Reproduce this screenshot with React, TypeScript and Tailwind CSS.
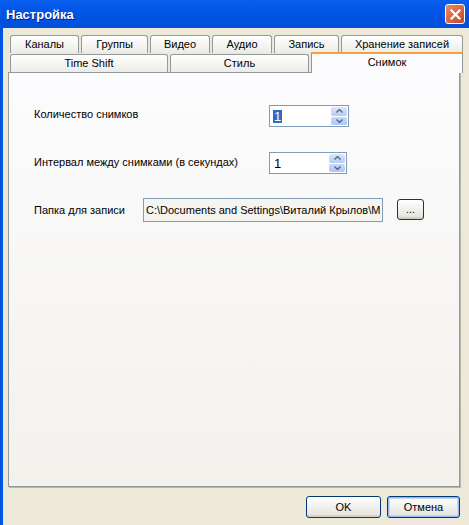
import { ReactNode } from "react";

const font = { fontFamily: '"Liberation Sans", Arial, sans-serif' };

function Tab({ w, children }: { w: string; children: ReactNode }) {
  return (
    <div
      className={`${w} h-[18px] shrink-0 rounded-t-[3px] border border-b-0 border-[#919b9c] bg-gradient-to-b from-[#ffffff] to-[#ecebe6] flex items-center justify-center text-[11px] text-black leading-none`}
    >
      {children}
    </div>
  );
}

function Spin({ w, selected }: { w: string; selected?: boolean }) {
  return (
    <div className={`${w} h-[22px] border border-[#7f9db9] bg-white flex items-stretch p-px`}>
      <div className="flex-1 flex items-center pl-[2px] text-[13px] leading-none">
        <span className={selected ? "bg-[#316ac5] text-white px-px" : "px-px"}>1</span>
      </div>
      <div className="w-[16px] flex flex-col gap-px">
        <div className="flex-1 rounded-[2px] bg-gradient-to-b from-[#dce6fb] to-[#b7cbf6] flex items-center justify-center">
          <svg width="7" height="4" viewBox="0 0 7 4">
            <path d="M0.5 3.5 L3.5 0.5 L6.5 3.5" fill="none" stroke="#4d6185" strokeWidth="1.3" />
          </svg>
        </div>
        <div className="flex-1 rounded-[2px] bg-gradient-to-b from-[#c9d8fa] to-[#b1c6f5] flex items-center justify-center">
          <svg width="7" height="4" viewBox="0 0 7 4">
            <path d="M0.5 0.5 L3.5 3.5 L6.5 0.5" fill="none" stroke="#4d6185" strokeWidth="1.3" />
          </svg>
        </div>
      </div>
    </div>
  );
}

function XpButton({ w, h, children, active }: { w: string; h: string; children: ReactNode; active?: boolean }) {
  return (
    <div
      className={`${w} ${h} rounded-[3px] border border-[#003c74] bg-gradient-to-b from-[#ffffff] to-[#e3e2da] flex items-center justify-center text-[11px] leading-none text-black ${
        active ? "shadow-[inset_0_0_0_1px_#97b6f2,inset_0_0_0_2px_#c6d7f8]" : "shadow-[inset_0_-2px_0_#d6d0c5]"
      }`}
    >
      {children}
    </div>
  );
}

export default function App() {
  return (
    <div className="w-[469px] h-[525px] bg-[#ece9d8] flex flex-col overflow-hidden" style={font}>
      {/* Title bar */}
      <div className="h-[28px] shrink-0 bg-gradient-to-b from-[#0a5ef0] via-[#0054e3] to-[#0050dc] flex items-center justify-between pl-[6px] pr-[4px]">
        <span
          className="text-white font-bold text-[13px] leading-none"
          style={{ textShadow: "1px 1px 0 #0a1e8a" }}
        >
          Настройка
        </span>
        <div className="w-[20px] h-[20px] rounded-[3px] border border-white bg-gradient-to-br from-[#e98a66] to-[#c8451e] flex items-center justify-center">
          <svg width="11" height="11" viewBox="0 0 11 11">
            <path d="M1.5 1.5 L9.5 9.5 M9.5 1.5 L1.5 9.5" stroke="white" strokeWidth="2.2" strokeLinecap="square" />
          </svg>
        </div>
      </div>

      {/* Body */}
      <div className="flex-1 flex flex-col border-l-[3px] border-[#0054e3] pl-[5px] pt-[7px]">
        {/* Tabs */}
        <div className="w-[452px] pl-[2px]">
          <div className="flex gap-[2px]">
            <Tab w="w-[69px]">Каналы</Tab>
            <Tab w="w-[67px]">Группы</Tab>
            <Tab w="w-[60px]">Видео</Tab>
            <Tab w="w-[60px]">Аудио</Tab>
            <Tab w="w-[65px]">Запись</Tab>
            <Tab w="w-[122px]">Хранение записей</Tab>
          </div>
          <div className="flex items-end h-[19px] gap-[2px]">
            <Tab w="w-[158px]">Time Shift</Tab>
            <Tab w="w-[139px]">Стиль</Tab>
            <div className="relative z-10 -mb-px w-[152px] h-[21px] shrink-0 border-x border-[#919b9c] border-t-2 border-t-[#f0a23c] bg-[#fcfcfe] flex justify-center pt-[3px] text-[11px] leading-none">
              Снимок
            </div>
          </div>
        </div>

        {/* Panel */}
        <div className="w-[452px] h-[415px] border border-[#919b9c] shadow-[1px_1px_0_#b8b6ac] bg-gradient-to-b from-[#fcfcfe] to-[#f3f1ec] pl-[25px] pt-[32px] flex flex-col text-[11px] text-black">
          <div className="flex items-center h-[22px]">
            <span className="w-[235px] -mt-[4px]">Количество снимков</span>
            <Spin w="w-[80px]" selected />
          </div>
          <div className="flex items-center h-[22px] mt-[25px]">
            <span className="w-[235px] -mt-[2px]">Интервал между снимками (в секундах)</span>
            <Spin w="w-[78px]" />
          </div>
          <div className="flex items-center h-[24px] mt-[24px]">
            <span className="w-[109px]">Папка для записи</span>
            <div className="w-[240px] h-[24px] border border-[#7f9db9] bg-[#f5f4ef] flex items-center pl-[2px] text-[11px] whitespace-nowrap overflow-hidden">
              C:\Documents and Settings\Виталий Крылов\М
            </div>
            <div className="ml-[14px] -mt-[2px]">
              <XpButton w="w-[27px]" h="h-[21px]">...</XpButton>
            </div>
          </div>
        </div>

        {/* Buttons */}
        <div className="flex justify-end gap-[6px] w-[452px] mt-[9px]">
          <XpButton w="w-[75px]" h="h-[22px]">OK</XpButton>
          <XpButton w="w-[73px]" h="h-[22px]" active>
            Отмена
          </XpButton>
        </div>
      </div>
    </div>
  );
}
